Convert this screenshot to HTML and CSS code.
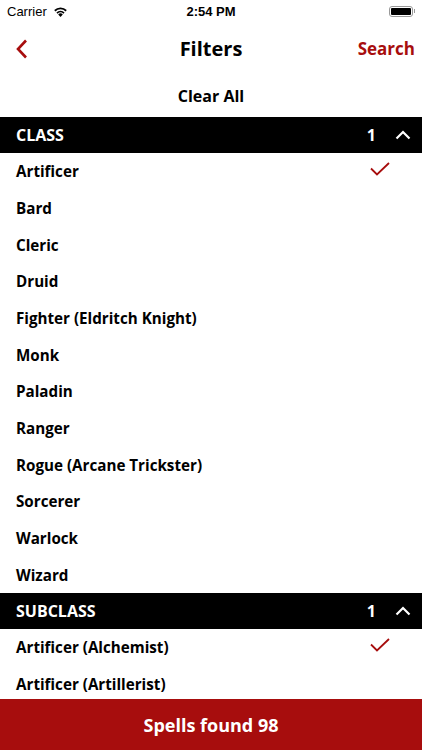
FILE: index.html
```html
<!DOCTYPE html>
<html lang="en">
<head>
    <meta charset="UTF-8">
    <meta name="viewport" content="width=device-width, initial-scale=1.0">
    <title>Filters</title>
    <link rel="stylesheet" href="styles.css">
</head>
<body>
    <div class="screen">
        <div class="status-bar">
            <div class="status-left">
                <span>Carrier</span>
                <svg class="wifi" width="15" height="11" viewBox="0 0 15 11">
                    <path d="M7.5 11 L5.2 8.4 A3.4 3.4 0 0 1 9.8 8.4 Z" fill="#000"/>
                    <path d="M3.4 6.4 A5.8 5.8 0 0 1 11.6 6.4 L10.4 7.7 A4.1 4.1 0 0 0 4.6 7.7 Z" fill="#000"/>
                    <path d="M1.2 4.1 A8.9 8.9 0 0 1 13.8 4.1 L12.6 5.4 A7.2 7.2 0 0 0 2.4 5.4 Z" fill="#000"/>
                </svg>
            </div>
            <div class="status-time">2:54 PM</div>
            <div class="status-right">
                <div class="battery"><div class="battery-level"></div></div>
                <div class="battery-tip"></div>
            </div>
        </div>

        <div class="nav-bar">
            <button class="back-btn">
                <svg width="12" height="20" viewBox="0 0 12 20">
                    <path d="M10 1.5 L2 10 L10 18.5" fill="none" stroke="#a70d0d" stroke-width="2.6"/>
                </svg>
            </button>
            <h1>Filters</h1>
            <button class="search-btn">Search</button>
        </div>

        <div class="clear-row">Clear All</div>

        <div class="list">
            <div class="section-header">
                <span>CLASS</span>
                <div class="section-right">
                    <span class="count">1</span>
                    <svg width="16" height="10" viewBox="0 0 16 10">
                        <path d="M1.5 8.5 L8 2 L14.5 8.5" fill="none" stroke="#fff" stroke-width="2.2"/>
                    </svg>
                </div>
            </div>
            <div class="row"><span>Artificer</span><svg class="check" width="20" height="14" viewBox="0 0 20 14"><path d="M1 6.5 L7 12.5 L19 1" fill="none" stroke="#a70d0d" stroke-width="1.8"/></svg></div>
            <div class="row"><span>Bard</span></div>
            <div class="row"><span>Cleric</span></div>
            <div class="row"><span>Druid</span></div>
            <div class="row"><span>Fighter (Eldritch Knight)</span></div>
            <div class="row"><span>Monk</span></div>
            <div class="row"><span>Paladin</span></div>
            <div class="row"><span>Ranger</span></div>
            <div class="row"><span>Rogue (Arcane Trickster)</span></div>
            <div class="row"><span>Sorcerer</span></div>
            <div class="row"><span>Warlock</span></div>
            <div class="row"><span>Wizard</span></div>

            <div class="section-header">
                <span>SUBCLASS</span>
                <div class="section-right">
                    <span class="count">1</span>
                    <svg width="16" height="10" viewBox="0 0 16 10">
                        <path d="M1.5 8.5 L8 2 L14.5 8.5" fill="none" stroke="#fff" stroke-width="2.2"/>
                    </svg>
                </div>
            </div>
            <div class="row"><span>Artificer (Alchemist)</span><svg class="check" width="20" height="14" viewBox="0 0 20 14"><path d="M1 6.5 L7 12.5 L19 1" fill="none" stroke="#a70d0d" stroke-width="1.8"/></svg></div>
            <div class="row"><span>Artificer (Artillerist)</span></div>
        </div>

        <div class="footer">Spells found 98</div>
    </div>
</body>
</html>
```

FILE: styles.css
```css
* {
    margin: 0;
    padding: 0;
    box-sizing: border-box;
}
body {
    font-family: "Open Sans", sans-serif;
    background-color: white;
    color: black;
}
.screen {
    width: 422px;
    height: 750px;
    display: flex;
    flex-direction: column;
    overflow: hidden;
}
.status-bar {
    height: 22px;
    display: flex;
    align-items: center;
    justify-content: space-between;
    padding: 0 7px 0 7px;
    font-family: "Liberation Sans", Arial, sans-serif;
    font-size: 13px;
    position: relative;
}
.status-left {
    display: flex;
    align-items: center;
    gap: 6px;
}
.status-time {
    position: absolute;
    left: 0;
    right: 0;
    text-align: center;
    font-weight: bold;
    font-size: 13px;
}
.status-right {
    display: flex;
    align-items: center;
}
.battery {
    width: 24px;
    height: 11px;
    border: 1px solid #999;
    border-radius: 3px;
    padding: 1px;
}
.battery-level {
    width: 100%;
    height: 100%;
    background-color: black;
    border-radius: 1px;
}
.battery-tip {
    width: 1.5px;
    height: 4px;
    background-color: #999;
    margin-left: 1px;
}
.nav-bar {
    height: 52px;
    display: flex;
    align-items: center;
    justify-content: space-between;
    padding: 0 7px 0 16px;
    position: relative;
}
.nav-bar h1 {
    position: absolute;
    left: 0;
    right: 0;
    text-align: center;
    font-size: 20px;
    font-weight: 700;
    pointer-events: none;
}
.back-btn, .search-btn {
    background: none;
    border: none;
    font-family: inherit;
    cursor: pointer;
}
.back-btn {
    display: flex;
    align-items: center;
    padding-top: 1px;
}
.search-btn {
    color: #a70d0d;
    font-size: 17px;
    font-weight: 700;
}
.clear-row {
    height: 43px;
    display: flex;
    align-items: center;
    justify-content: center;
    font-size: 16px;
    font-weight: 700;
}
.list {
    flex: 1;
    overflow: hidden;
}
.section-header {
    height: 36px;
    background-color: black;
    color: white;
    display: flex;
    align-items: center;
    justify-content: space-between;
    padding: 0 11px 0 16px;
    font-size: 16px;
    font-weight: 700;
}
.section-right {
    display: flex;
    align-items: center;
    gap: 19px;
}
.row {
    height: 36.67px;
    display: flex;
    align-items: center;
    justify-content: space-between;
    padding: 0 32px 0 16px;
    font-size: 15.2px;
    font-weight: 700;
}
.check {
    margin-bottom: 4px;
}
.footer {
    height: 51px;
    background-color: #a70d0d;
    color: white;
    display: flex;
    align-items: center;
    justify-content: center;
    font-size: 18px;
    font-weight: 700;
    flex-shrink: 0;
}
```
